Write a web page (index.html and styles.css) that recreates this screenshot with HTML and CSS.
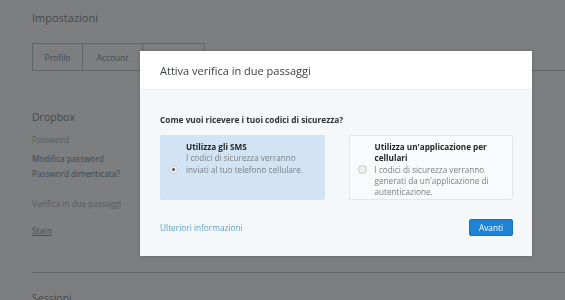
FILE: index.html
```html
<!DOCTYPE html>
<html lang="it">
<head>
  <meta charset="UTF-8">
  <title>Impostazioni</title>
  <link rel="stylesheet" href="styles.css">
</head>
<body>

<!-- Pagina delle impostazioni (sotto il modale) -->
<div class="page">
  <h1 class="page-title">Impostazioni</h1>

  <div class="tabs">
    <a class="tab">Profilo</a>
    <a class="tab">Account</a>
    <a class="tab active">Sicurezza</a>
  </div>

  <div class="section">
    <h2 class="section-title">Dropbox</h2>
    <div class="label">Password</div>
    <div class="links">
      <a class="link">Modifica password</a>
      <a class="link">Password dimenticata?</a>
    </div>
    <div class="label twostep">Verifica in due passaggi</div>
    <div class="label stato">Stato</div>
  </div>

  <div class="section last">
    <h2 class="section-title">Sessioni</h2>
  </div>
</div>

<!-- Overlay e modale -->
<div class="overlay">
  <div class="modal">
    <div class="modal-header">Attiva verifica in due passaggi</div>
    <div class="modal-body">
      <p class="question">Come vuoi ricevere i tuoi codici di sicurezza?</p>
      <div class="options">
        <label class="option selected">
          <span class="radio checked"></span>
          <span class="option-text">
            <strong>Utilizza gli SMS</strong>
            I codici di sicurezza verranno inviati al tuo telefono cellulare.
          </span>
        </label>
        <label class="option">
          <span class="radio"></span>
          <span class="option-text">
            <strong>Utilizza un'applicazione per cellulari</strong>
            I codici di sicurezza verranno generati da un'applicazione di autenticazione.
          </span>
        </label>
      </div>
      <div class="modal-footer">
        <a class="more">Ulteriori informazioni</a>
        <button class="btn-primary">Avanti</button>
      </div>
    </div>
  </div>
</div>

</body>
</html>
```

FILE: styles.css
```css
body {
  margin: 0;
  font-family: "Open Sans", "Noto Sans", sans-serif;
  background-color: #fff;
  height: 300px;
  overflow: hidden;
}

.page {
  padding: 10px 0 0 32px;
}

.page-title {
  margin: 0 0 18px;
  font-size: 11px;
  line-height: 15px;
  font-weight: 400;
  color: #8f9296;
}

.tabs {
  display: flex;
  border-bottom: 1px solid #c9ccd0;
}

.tab {
  width: 51px;
  height: 27px;
  box-sizing: border-box;
  padding-top: 8px;
  text-align: center;
  font-size: 8.5px;
  line-height: 11px;
  color: #8aa0b8;
  border: 1px solid #c9ccd0;
  border-bottom: none;
  margin-right: -1px;
}

.tab:nth-child(2) {
  width: 61px;
}

.tab.active {
  width: 63px;
}

.section {
  padding-top: 38px;
  padding-bottom: 34px;
  border-bottom: 1px solid #c9ccd0;
  font-size: 8.2px;
  line-height: 15px;
}

.section.last {
  border-bottom: none;
  padding-top: 17px;
}

.section-title {
  margin: 0 0 7px;
  font-size: 10.5px;
  line-height: 16px;
  font-weight: 400;
  color: #8f9296;
}

.label {
  color: #b9bcbf;
}

.links {
  display: flex;
  flex-direction: column;
  margin-top: 4px;
}

.link {
  color: #7896b5;
}

.twostep {
  margin-top: 15px;
}

.stato {
  margin-top: 12px;
  color: #9ea1a4;
  text-decoration: underline;
}

.overlay {
  position: fixed;
  inset: 0;
  background-color: rgba(0, 3, 6, 0.515);
}

.modal {
  position: absolute;
  left: 140px;
  top: 51px;
  width: 392px;
  background-color: #f5f8fb;
  box-shadow: 0 0 4px rgba(0, 0, 0, 0.2);
}

.modal-header {
  height: 39px;
  box-sizing: border-box;
  padding: 12px 20px 0;
  background-color: #fff;
  border-bottom: 1px solid #e9edf1;
  font-size: 11px;
  line-height: 16px;
  color: #3d4145;
}

.modal-body {
  padding: 24px 19px 20px 20px;
}

.question {
  margin: 0 0 10px;
  font-size: 8.3px;
  font-weight: 700;
  color: #2f3235;
}

.options {
  display: flex;
  gap: 24px;
}

.option {
  flex: 1;
  display: flex;
  align-items: center;
  gap: 8px;
  padding: 5px 8px 2px 8px;
  border: 1px solid #e3e7eb;
  border-radius: 2px;
  background-color: #f8fafc;
  font-size: 8.2px;
  line-height: 11.25px;
  color: #7c8085;
}

.option.selected {
  background-color: #d2e3f4;
  border-color: #d2e3f4;
}

.option-text {
  align-self: flex-start;
}

.option-text strong {
  display: block;
  color: #23272b;
}

.radio {
  flex: none;
  width: 7px;
  height: 7px;
  border-radius: 50%;
  border: 1px solid #c8cbcf;
  background-color: #eceef0;
  position: relative;
}

.radio.checked::after {
  content: "";
  position: absolute;
  left: 2px;
  top: 2px;
  width: 3px;
  height: 3px;
  border-radius: 50%;
  background-color: #555;
}

.modal-footer {
  display: flex;
  justify-content: space-between;
  align-items: center;
  margin-top: 19px;
}

.more {
  font-size: 8.3px;
  color: #5aa0c7;
}

.btn-primary {
  width: 44px;
  height: 17px;
  padding: 0;
  border: 1px solid #1a72bd;
  border-radius: 2px;
  background-color: #1f83d5;
  color: #fff;
  font-family: inherit;
  font-size: 8.3px;
}
```
